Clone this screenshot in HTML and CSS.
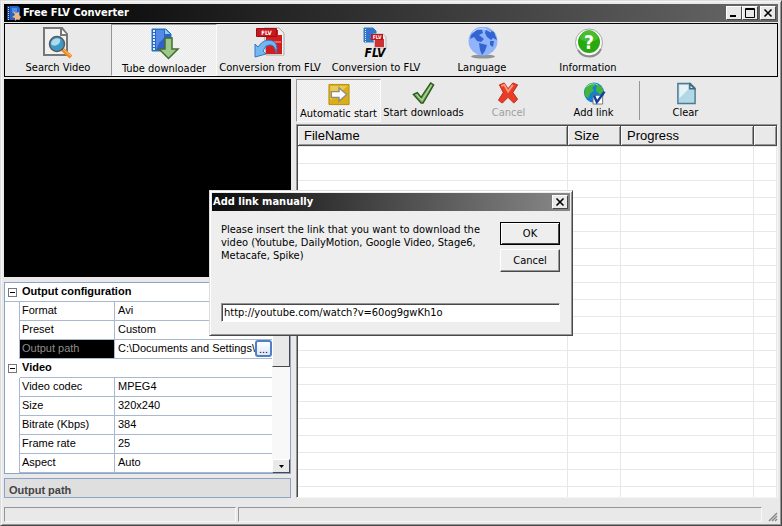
FILE: index.html
```html
<!DOCTYPE html>
<html lang="en">
<head>
<meta charset="utf-8">
<title>Free FLV Converter</title>
<link rel="stylesheet" href="styles.css">
</head>
<body>
<div class="window">
  <header class="titlebar">
    <svg class="app-icon" viewBox="0 0 16 16" aria-hidden="true"><path d="M1 1h11l2 2v12H1z" fill="#2763c4"/><path d="M1 1h3v14H1z" fill="#1b3e86"/><path d="M2.500 2v13" stroke="#b9dcff" stroke-dasharray="1 1"/><path d="M6 3h5v5H6z" fill="#4d8dea"/><path d="M7 6l3 2 3-1v3l2 2-2 3-2-1-2 2v-3l-3-1 3-2z" fill="#f3b878"/></svg>
    <h1 class="title">Free FLV Converter</h1>
    <button class="caption-btn" aria-label="Minimize"><svg viewBox="0 0 12 10"><path d="M2 8h6" stroke="#000" stroke-width="2"/></svg></button>
    <button class="caption-btn" aria-label="Maximize"><svg viewBox="0 0 12 10"><path d="M1.500 .500h9v9h-9zM1 1.500h10" fill="none" stroke="#000"/></svg></button>
    <button class="caption-btn close" aria-label="Close"><svg viewBox="0 0 12 10"><path d="M2.500 1.500l7 7M9.500 1.500l-7 7" stroke="#000" stroke-width="1.600"/></svg></button>
  </header>

  <nav class="toolbar">
    <button class="tool">
      <svg class="icon" viewBox="0 0 32 32" aria-hidden="true"><path d="M2 1h18l5 6v21H2z" fill="#f1f1f1" stroke="#777" stroke-width="2"/><path d="M19 2v6h6" fill="#fff" stroke="#777" stroke-width="2"/><path d="M20 22l9 8" stroke="#f28a1e" stroke-width="4"/><path d="M21 22l8 7" stroke="#ffc77a" stroke-width="1"/><circle cx="15" cy="17" r="7.500" fill="#3f97c4" stroke="#555b60" stroke-width="1.500"/><path d="M9 17a6 6 0 0 1 9-5q1 4-3 6t-6-1z" fill="#a9dcf0"/></svg>
      <span>Search Video</span>
    </button>
    <button class="tool pressed" aria-pressed="true">
      <svg class="icon" viewBox="0 0 32 32" aria-hidden="true"><path d="M4 1h14l5 5v17H4z" fill="#2f62c9" stroke="#1e7fb5"/><path d="M8 2h8v8l-5 5-3 7z" fill="#5489e6"/><path d="M6 2v21" stroke="#d5edff" stroke-width="2" stroke-dasharray="2 1"/><path d="M17 1v5h5z" fill="#8fd2f0"/><path d="M17 10h7v11h6L20.500 30.500 11 21h6z" fill="#9bc98a" stroke="#476b30" stroke-width="1.500"/></svg>
      <span>Tube downloader</span>
    </button>
    <button class="tool">
      <svg class="icon" viewBox="0 0 32 32" aria-hidden="true"><path d="M10 1h15l5 5v22H12z" fill="#eee" stroke="#aaa"/><path d="M12 3h12v5h4v19H12z" fill="#d01d22"/><path d="M12 15h15" stroke="#ffb0a8"/><path d="M28.500 9v19" stroke="#fff" stroke-dasharray="2 1"/><path d="M2.500 1.500h20v8h-20z" fill="#c71920" stroke="#9c1015"/><text x="12.500" y="8" fill="#fff" text-anchor="middle" class="badge">FLV</text><path d="M1 17l3 3C9 12 18 11 22 17q2 4 0 9-1-9-7-8-4 0-6 6l3 3-11 3z" fill="#72b7f2" stroke="#3478c2"/></svg>
      <span>Conversion from FLV</span>
    </button>
    <button class="tool">
      <svg class="icon" viewBox="0 0 32 32" aria-hidden="true"><path d="M4 1h9l3 3v11H4z" fill="#3672cc" stroke="#2880b4"/><path d="M5.500 2v13" stroke="#d8eeff" stroke-dasharray="1 1"/><path d="M13 7h10l3 3v11H15z" fill="#eee" stroke="#bbb"/><path d="M15 12h9v8h-9z" fill="#cf3034"/><path d="M11 7h12v6H11z" fill="#bb171c"/><text x="17" y="12" fill="#fff" text-anchor="middle" class="badge small">FLV</text><text x="15" y="30" text-anchor="middle" class="logo-word">FLV</text></svg>
      <span>Conversion to FLV</span>
    </button>
    <button class="tool">
      <svg class="icon globe" viewBox="0 0 32 32" aria-hidden="true"><ellipse cx="17" cy="29.500" rx="12" ry="2" fill="#8f9499"/><circle cx="17" cy="14" r="14.500" fill="#8fb4fb"/><path d="M5 8l6-6 5 1 1 3-4 2 5 4-3 3-4-1-3-4-4 2zM20 2l8 3 3 8-4-2-2 2-4-3-2-4zM13 16l8 2-2 6-3 4-2-5zM24 14l4 0-1 6-3-2z" fill="#3364cf"/><path d="M7 5q8-7 18 0" fill="none" stroke="#cfe0ff"/></svg>
      <span>Language</span>
    </button>
    <button class="tool">
      <svg class="icon" viewBox="0 0 32 32" aria-hidden="true"><circle cx="17" cy="15.500" r="13.500" fill="#fafafa" stroke="#a8a8a8"/><path d="M6 23a13 13 0 0 0 23-1" fill="none" stroke="#8c8c8c" stroke-width="2"/><circle cx="17" cy="15" r="11" fill="#28a910"/><path d="M8 12a9 9 0 0 1 18 0q-9 6-18 0z" fill="#46bd2c"/><text x="17" y="22" fill="#fff" text-anchor="middle" class="question">?</text></svg>
      <span>Information</span>
    </button>
  </nav>

  <main class="workspace">
    <section class="side">
      <div class="preview"></div>
      <div class="inspector">
        <table class="props">
          <colgroup><col class="c-gutter"><col class="c-name"><col></colgroup>
          <tbody>
          <tr class="group"><th class="fold"><button class="minus" aria-label="Collapse Output configuration"></button></th><th colspan="2">Output configuration</th></tr>
          <tr><td class="gutter"></td><th>Format</th><td>Avi</td></tr>
          <tr><td class="gutter"></td><th>Preset</th><td>Custom</td></tr>
          <tr class="selected"><td class="gutter"></td><th>Output path</th><td><div class="path"><span>C:\Documents and Settings\N</span><button class="browse" aria-label="Browse">...</button></div></td></tr>
          <tr class="group"><th class="fold"><button class="minus" aria-label="Collapse Video"></button></th><th colspan="2">Video</th></tr>
          <tr><td class="gutter"></td><th>Video codec</th><td>MPEG4</td></tr>
          <tr><td class="gutter"></td><th>Size</th><td>320x240</td></tr>
          <tr><td class="gutter"></td><th>Bitrate (Kbps)</th><td>384</td></tr>
          <tr><td class="gutter"></td><th>Frame rate</th><td>25</td></tr>
          <tr><td class="gutter"></td><th>Aspect</th><td>Auto</td></tr>
          </tbody>
        </table>
        <div class="scrollbar">
          <div class="thumb"></div>
          <button class="scroll-down" aria-label="Scroll down"><svg viewBox="0 0 5 3"><path d="M0 0h5L2.500 3z"/></svg></button>
        </div>
      </div>
      <div class="hint">Output path</div>
    </section>

    <section class="downloads">
      <div class="actions">
        <button class="action pressed" aria-pressed="true">
          <svg class="icon" viewBox="0 0 24 24" aria-hidden="true"><path d="M1.500 1.500h21v21h-21z" fill="#d9ae18" stroke="#b98d12"/><path d="M3 3h18L3 18z" fill="#ebca55"/><path d="M4 9h8V5l8 7-8 7v-4H4z" fill="#fff" stroke="#8d8d84" stroke-width="1.500"/></svg>
          <span>Automatic start</span>
        </button>
        <button class="action">
          <svg class="icon" viewBox="0 0 24 24" aria-hidden="true"><path d="M1 13l4-2 4 5L19 1l3 2-11 19H9z" fill="#79b565" stroke="#315720" stroke-width="1.500"/><path d="M4 13l6 6L20 3" fill="none" stroke="#c0e4af"/></svg>
          <span>Start downloads</span>
        </button>
        <button class="action" disabled>
          <svg class="icon" viewBox="0 0 24 24" aria-hidden="true"><path d="M2 3l5-2 4 6 5-6 5 2-5 8 5 7-4 4-6-6-6 6-4-3 5-8z" fill="#ed3c25" stroke="#b92a19"/><path d="M4 4l3-1 4 7 5-7" fill="none" stroke="#ff9a7c" stroke-width="2"/></svg>
          <span>Cancel</span>
        </button>
        <button class="action">
          <svg class="icon" viewBox="0 0 24 24" aria-hidden="true"><circle cx="12" cy="11" r="10.500" fill="#147fd3"/><path d="M3 6q3-5 8-5l2 3-3 2 2 3-4 3-2 5-4-3zM15 2l5 3 2 5-4 3-4-4z" fill="#43b53c"/><path d="M4 5q6-5 12-2" fill="none" stroke="#8fe4b1"/><path d="M11 14h10v9H11z" fill="#fff" stroke="#777"/><path d="M12 14l3 7 8-11" fill="none" stroke="#123f9b" stroke-width="2.500"/></svg>
          <span>Add link</span>
        </button>
        <div class="separator"></div>
        <button class="action">
          <svg class="icon" viewBox="0 0 24 24" aria-hidden="true"><path d="M3.500 1.500h13l5 5v16h-18z" fill="#b2d8e6" stroke="#4c7c90" stroke-width="1.500"/><path d="M5 3h9v5L5 17z" fill="#e3f3f8"/><path d="M16 2v5h5z" fill="#e8f5fa" stroke="#3f687a" stroke-width="1.500"/></svg>
          <span>Clear</span>
        </button>
      </div>
      <div class="list">
        <table class="files">
          <colgroup><col><col class="c-size"><col class="c-progress"><col class="c-rest"></colgroup>
          <thead><tr><th>FileName</th><th>Size</th><th>Progress</th><th></th></tr></thead>
          <tbody><tr><td></td><td></td><td></td><td></td></tr></tbody>
        </table>
      </div>
    </section>
  </main>

  <footer class="statusbar">
    <div class="panel"></div>
    <div class="panel wide"></div>
    <svg class="grip" viewBox="0 0 12 12" aria-hidden="true"><path d="M3 11l8-8M6 11l5-5M9 11l2-2" stroke="#8a8a8a" stroke-width="1.500"/></svg>
  </footer>

  <form class="dialog" role="dialog" aria-labelledby="dialog-title">
    <div class="dialog-bar">
      <h2 class="title" id="dialog-title">Add link manually</h2>
      <button type="button" class="caption-btn" aria-label="Close dialog"><svg viewBox="0 0 12 10"><path d="M2.500 1.500l7 7M9.500 1.500l-7 7" stroke="#000" stroke-width="1.600"/></svg></button>
    </div>
    <div class="dialog-body">
      <label for="link">Please insert the link that you want to download the video (Youtube, DailyMotion, Google Video, Stage6, Metacafe, Spike)</label>
      <div class="dialog-buttons">
        <button type="button" class="push default">OK</button>
        <button type="button" class="push">Cancel</button>
      </div>
      <input id="link" type="text" value="http://youtube.com/watch?v=60og9gwKh1o">
    </div>
  </form>
</div>
</body>
</html>
```
FILE: styles.css
```css
:root {
  --face: #e9e9e9;
  --shadow: #969696;
  --dark: #484848;
  --line: #a8b8d0;
  --ui: "DejaVu Sans Condensed", "DejaVu Sans", sans-serif;
  --grid: "Liberation Sans", Arial, sans-serif;
}

* { box-sizing: border-box; }

body {
  margin: 0;
  background: var(--face);
  color: #000;
  font: 11px/13px var(--ui);
}

button, input { font: inherit; color: inherit; }
button { padding: 0; border: 0; border-radius: 0; background: none; }
svg { display: block; }

.window {
  position: relative;
  display: flex;
  flex-direction: column;
  min-height: 100vh;
  padding: 3px 2px 2px 3px;
  border: 1px solid;
  border-color: #dcdcdc var(--dark) var(--dark) #dcdcdc;
  box-shadow: inset 1px 1px #f6f6f6, inset -1px -1px var(--shadow);
}

/* Title bars */
.titlebar, .dialog-bar {
  display: flex;
  align-items: center;
  height: 18px;
  padding-right: 2px;
  color: #fff;
}
.titlebar { margin-right: 1px; padding-left: 2px; background: linear-gradient(90deg, #000, #686868); }
.dialog-bar { padding-left: 1px; background: linear-gradient(90deg, #0c0c0c, #888); }
.app-icon { width: 16px; height: 16px; margin-right: 1px; }
.title { flex: 1; margin: 0; font: bold 11px/16px var(--ui); }
.caption-btn {
  display: grid;
  place-items: center;
  width: 16px;
  height: 14px;
  background: var(--face);
  border: 1px solid;
  border-color: #fff var(--dark) var(--dark) #fff;
}
.caption-btn svg { width: 12px; height: 10px; }
.caption-btn.close { margin-left: 2px; }

/* Main toolbar */
.toolbar {
  display: flex;
  height: 54px;
  margin: 1px 1px 2px 0;
  border: 1px solid #000;
}
.tool, .action {
  display: flex;
  flex-direction: column;
  align-items: center;
  justify-content: flex-start;
  white-space: nowrap;
  border: 1px solid transparent;
}
.tool { gap: 2px; width: 106px; padding-top: 2px; }
.tool .icon { width: 32px; height: 32px; }
.pressed {
  border-color: var(--shadow) #fafafa #fafafa var(--shadow);
  background: repeating-conic-gradient(#f6f6f6 0 25%, #eaeaea 0 50%) 0 0 / 2px 2px;
}
.pressed > * { transform: translate(0, 1px); }
.badge { font: bold 6px var(--ui); }
.badge.small { font-size: 5px; }
.logo-word { font: italic bold 12px var(--ui); }
.question { font: bold 19px var(--ui); }

.workspace {
  flex: 1;
  display: grid;
  grid-template-columns: 287px 1fr;
  column-gap: 5px;
}

/* Left side */
.side { display: flex; flex-direction: column; }
.preview { flex: 1; background: #000; }
.inspector {
  display: flex;
  margin: 5px 0 4px;
  border: 1px solid #8ca5c5;
  background: #fff;
}
.props {
  flex: 1;
  table-layout: fixed;
  border-spacing: 0;
  width: 0;
  font: 11px/16px var(--grid);
}
.c-gutter { width: 15px; }
.c-name { width: 95px; }
.props th, .props td {
  height: 19px;
  padding: 0 0 0 2px;
  border-bottom: 1px solid var(--line);
  text-align: left;
  vertical-align: top;
  font-weight: normal;
  white-space: nowrap;
}
.props th + td { padding-left: 3px; }
.props .gutter + th, .props .gutter { border-right: 1px solid var(--line); }
.props .gutter { border-bottom: 0; }
.props .group th { font-weight: bold; }
.props .group .fold { padding: 0 0 0 3px; border-bottom: 0; vertical-align: middle; }
.props .group:first-child .fold { border-bottom: 1px solid var(--line); }
.props .selected th { background: #000; color: #8c8c8c; }
.minus {
  display: block;
  width: 9px;
  height: 9px;
  border: 1px solid #777;
  background: linear-gradient(#000, #000) center / 5px 1px no-repeat;
}
.path { display: flex; height: 18px; }
.path span { flex: 1; width: 0; overflow: hidden; }
.browse {
  width: 17px;
  height: 17px;
  border: 2px solid #4f7fc5;
  border-radius: 3px;
  background: linear-gradient(#fff, #dce7fa);
  line-height: 10px;
}
.scrollbar {
  display: flex;
  flex-direction: column;
  justify-content: space-between;
  width: 18px;
  background: #f8f8f8;
}
.thumb, .scroll-down {
  border: 1px solid;
  border-color: #fff var(--dark) var(--dark) #fff;
  background: var(--face);
}
.thumb { height: 84px; }
.scroll-down { display: grid; place-items: center; height: 14px; }
.scroll-down svg { width: 5px; height: 3px; }
.hint {
  height: 20px;
  padding-left: 4px;
  border: 1px solid #8ca5c5;
  background: #dfdfdf;
  color: #444;
  font: bold 11px/22px var(--grid);
}

/* Right side */
.downloads { display: flex; flex-direction: column; }
.actions { display: flex; height: 43px; }
.action { width: 85px; padding-top: 2px; }
.action .icon { width: 24px; height: 24px; }
.action span { line-height: 16px; }
.action:disabled { color: #a0a0a0; }
.separator { width: 1px; margin: 2px 3px 2px 3px; background: var(--shadow); }
.list {
  flex: 1;
  display: flex;
  margin-top: 2px;
  margin-right: 1px;
  border: 1px solid;
  border-color: var(--shadow) #f6f6f6 #f6f6f6 var(--shadow);
}
.files {
  width: 100%;
  table-layout: fixed;
  border-spacing: 0;
  border: solid var(--dark);
  border-width: 1px 0 0 1px;
  background: #fff;
}
.c-size { width: 53px; }
.c-progress { width: 133px; }
.c-rest { width: 23px; }
.files th {
  height: 20px;
  padding: 1px 0 0 6px;
  border: solid var(--dark);
  border-width: 0 1px 1px 0;
  box-shadow: inset 1px 1px #f8f8f8, inset -1px -1px var(--shadow);
  background: var(--face);
  font: 13px/18px var(--grid);
  text-align: left;
}
.files td {
  padding: 0;
  border-right: 1px solid #e8e8e8;
  background: linear-gradient(#fff 16px, #e8e8e8 16px) 0 1px / 100% 17px;
}

/* Status bar */
.statusbar { display: flex; gap: 2px; height: 15px; margin: 9px 0 1px; }
.panel {
  width: 232px;
  border: 1px solid;
  border-color: var(--shadow) #f8f8f8 #f8f8f8 var(--shadow);
}
.panel.wide { flex: 1; }
.grip { align-self: flex-end; width: 12px; height: 12px; margin: 0 1px 0 2px; }

/* Dialog */
.dialog {
  position: absolute;
  inset: 0;
  width: 364px;
  height: fit-content;
  margin: auto;
  padding: 2px;
  border: 1px solid;
  border-color: #ddd var(--dark) var(--dark) #ddd;
  box-shadow: inset 1px 1px #fff, inset -1px -1px var(--shadow);
  background: #eee;
}
.dialog-body {
  display: grid;
  grid-template-columns: 1fr 60px;
  gap: 31px 12px;
  padding: 11px 10px 11px 9px;
}
.dialog-body label { padding-top: 1px; }
.dialog-buttons { display: grid; gap: 4px; }
.push {
  height: 23px;
  border: 1px solid;
  border-color: #fff var(--dark) var(--dark) #fff;
  box-shadow: inset -1px -1px var(--shadow);
}
.push.default { border-color: #000; box-shadow: inset 1px 1px #fff, inset -1px -1px var(--dark); }
.dialog-body input {
  grid-column: 1 / -1;
  height: 19px;
  padding: 0 2px;
  border: 1px solid;
  border-color: var(--shadow) #fff #fff var(--shadow);
  border-radius: 0;
  box-shadow: inset 1px 1px var(--dark);
  background: #fff;
  outline: 0;
}
```
